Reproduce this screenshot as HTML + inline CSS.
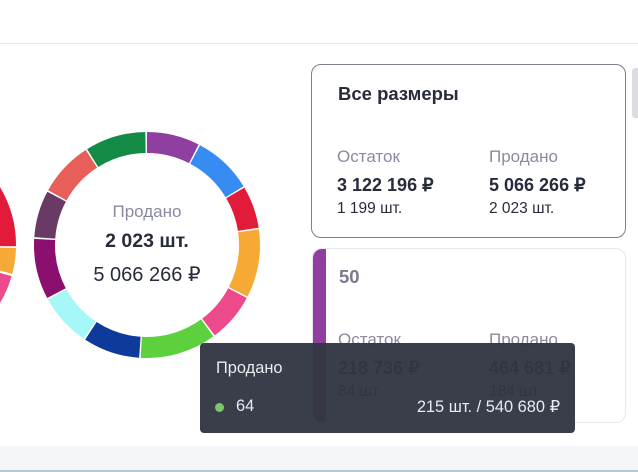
<!DOCTYPE html>
<html><head><meta charset="utf-8"><style>
*{margin:0;padding:0;box-sizing:border-box}
body{width:638px;height:472px;overflow:hidden;background:#fff;font-family:"Liberation Sans",sans-serif;position:relative;color:#272b3a}
.abs{position:absolute}
.card{position:absolute;border-radius:10px;background:#fff}
.t{position:absolute;white-space:nowrap}
.lab{font-size:17px;color:#8a8aa2}
.val{font-size:18px;font-weight:bold;color:#272b3a}
.sm{font-size:15.5px;color:#272b3a}
</style></head><body>
<div class="abs" style="left:0;top:43px;width:638px;height:1px;background:#e3e3ea"></div>
<svg class="abs" style="left:0;top:0" width="310" height="446">
<g fill="none" stroke-width="21">
<circle cx="-97" cy="245" r="102.5" stroke="#e31b3a" stroke-dasharray="112 600" transform="rotate(-62 -97 245)"/>
<circle cx="-97" cy="245" r="102.5" stroke="#f7a935" stroke-dasharray="22 620" transform="rotate(2.5 -97 245)"/>
<circle cx="-97" cy="245" r="102.5" stroke="#ec4a8a" stroke-dasharray="30 620" transform="rotate(16 -97 245)"/>
<g transform="translate(147 245)">
<circle r="102.5" stroke="#8e3fa0" stroke-dasharray="48.6 700" transform="rotate(-90)"/>
<circle r="102.5" stroke="#368cf0" stroke-dasharray="54.9 700" transform="rotate(-62)"/>
<circle r="102.5" stroke="#e31b3a" stroke-dasharray="38.8 700" transform="rotate(-30.5)"/>
<circle r="102.5" stroke="#f7a935" stroke-dasharray="62.9 700" transform="rotate(-8)"/>
<circle r="102.5" stroke="#ec4a8a" stroke-dasharray="45 700" transform="rotate(28)"/>
<circle r="102.5" stroke="#5dd13d" stroke-dasharray="70.1 700" transform="rotate(54)"/>
<circle r="102.5" stroke="#0e3b9b" stroke-dasharray="52.2 700" transform="rotate(94)"/>
<circle r="102.5" stroke="#a6f7f7" stroke-dasharray="48.6 700" transform="rotate(124)"/>
<circle r="102.5" stroke="#8a0f6e" stroke-dasharray="55.7 700" transform="rotate(152)"/>
<circle r="102.5" stroke="#6a3a66" stroke-dasharray="43.2 700" transform="rotate(184)"/>
<circle r="102.5" stroke="#e85f5a" stroke-dasharray="50.4 700" transform="rotate(209)"/>
<circle r="102.5" stroke="#138a45" stroke-dasharray="55.7 700" transform="rotate(238)"/>
</g></g>
<text x="147" y="217" text-anchor="middle" font-family="Liberation Sans" font-size="17" fill="#8a8aa2">Продано</text>
<text x="147" y="247" text-anchor="middle" font-family="Liberation Sans" font-size="19.5" font-weight="bold" fill="#272b3a">2 023 шт.</text>
<text x="147" y="281" text-anchor="middle" font-family="Liberation Sans" font-size="20" fill="#272b3a">5 066 266 ₽</text>
</svg>

<div class="card" style="left:311px;top:64px;width:315px;height:174px;border:1px solid #7e7e92">
<div class="t" style="left:26px;top:18px;font-size:18.5px;font-weight:bold">Все размеры</div>
<div class="t lab" style="left:25px;top:82px">Остаток</div>
<div class="t val" style="left:25px;top:110px">3 122 196 ₽</div>
<div class="t sm" style="left:25px;top:135px">1 199 шт.</div>
<div class="t lab" style="left:177px;top:82px">Продано</div>
<div class="t val" style="left:177px;top:110px">5 066 266 ₽</div>
<div class="t sm" style="left:177px;top:135px">2 023 шт.</div>
</div>
<div class="abs" style="left:632px;top:68px;width:6px;height:50px;background:#dcdce2;border-radius:3px 0 0 3px"></div>

<div class="card" style="left:312px;top:248px;width:314px;height:175px;border:1px solid #e6e6ee;overflow:hidden">
<div class="abs" style="left:0;top:0;width:13px;height:175px;background:#8e3fa0"></div>
<div class="t" style="left:26px;top:17px;font-size:18.5px;font-weight:bold;color:#7a7a90">50</div>
<div class="t lab" style="left:25px;top:81px">Остаток</div>
<div class="t val" style="left:25px;top:109px">218 736 ₽</div>
<div class="t sm" style="left:25px;top:134px">84 шт.</div>
<div class="t lab" style="left:176px;top:81px">Продано</div>
<div class="t val" style="left:176px;top:109px">464 681 ₽</div>
<div class="t sm" style="left:176px;top:134px">184 шт.</div>
</div>

<div class="abs" style="left:200px;top:343px;width:375px;height:90px;background:rgba(50,54,68,0.96);border-radius:4px">
<div class="t" style="left:16px;top:16px;font-size:16.4px;color:#eaeaf0">Продано</div>
<div class="abs" style="left:15px;top:60px;width:9px;height:9px;border-radius:50%;background:#7dc56a"></div>
<div class="t" style="left:36px;top:54px;font-size:16.4px;color:#eaeaf0">64</div>
<div class="t" style="right:15px;top:54px;font-size:16.4px;color:#eaeaf0">215 шт. / 540 680 ₽</div>
</div>

<div class="abs" style="left:0;top:446px;width:638px;height:26px;background:#f3f6f9"></div>
<div class="abs" style="left:0;top:470px;width:638px;height:2px;background:#b8c6d2"></div>
</body></html>
